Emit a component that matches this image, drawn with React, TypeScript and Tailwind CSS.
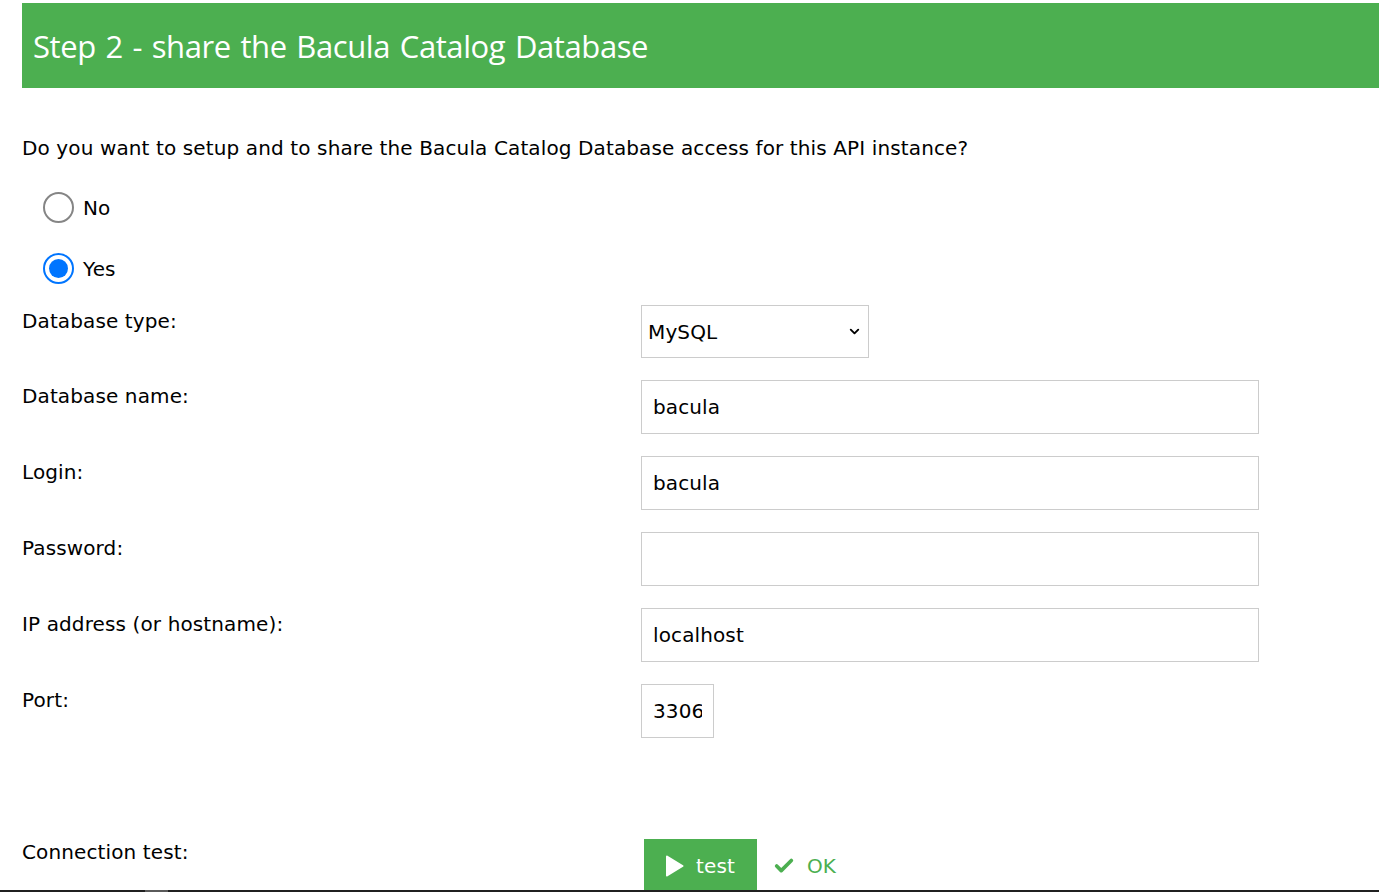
import { Check, ChevronDown } from "lucide-react";

const fields = [
  { label: "Database name:", value: "bacula", width: "w-[618px]" },
  { label: "Login:", value: "bacula", width: "w-[618px]" },
  { label: "Password:", value: "", width: "w-[618px]" },
  { label: "IP address (or hostname):", value: "localhost", width: "w-[618px]" },
  { label: "Port:", value: "3306", width: "w-[73px]" },
];

const Radio = ({ checked, label }: { checked?: boolean; label: string }) => {
  return (
    <label className="flex items-center gap-[9px] h-[31px]">
      {checked ? (
        <span className="w-[31px] h-[31px] rounded-full border-2 border-[#0075ff] bg-white flex items-center justify-center">
          <span className="w-[19px] h-[19px] rounded-full bg-[#0075ff]" />
        </span>
      ) : (
        <span className="w-[31px] h-[31px] rounded-full border-2 border-[#858585] bg-white" />
      )}
      <span>{label}</span>
    </label>
  );
};

const App = () => {
  return (
    <div className="w-[1379px] h-[892px] overflow-hidden flex flex-col bg-white text-black font-[family-name:'DejaVu_Sans',sans-serif] text-[20px] tracking-[0.12px]">
      <div className="flex-1 overflow-hidden pt-[3px] pl-[22px]">
        <header className="h-[85px] bg-[#4caf50] flex items-center pl-[11px]">
          <h1 className="text-white text-[31px] font-[family-name:'Open_Sans',sans-serif] tracking-[-0.4px] [word-spacing:2px] pt-[2px]">
            Step 2 - share the Bacula Catalog Database
          </h1>
        </header>

        <p className="mt-[48px] leading-[24px]">
          Do you want to setup and to share the Bacula Catalog Database access for this API instance?
        </p>

        <div className="mt-[32px] pl-[21px] flex flex-col gap-[30px]">
          <Radio label="No" />
          <Radio checked label="Yes" />
        </div>

        <div className="mt-[21px] flex flex-col gap-[22px]">
          <div className="flex">
            <div className="w-[619px] pt-[4px] leading-[24px]">Database type:</div>
            <div className="w-[228px] h-[53px] border border-[#cccccc] flex items-center justify-between pl-[6px] pr-[6px]">
              <span>MySQL</span>
              <ChevronDown className="w-[15px] h-[15px]" strokeWidth={3} />
            </div>
          </div>

          {fields.map((f) => (
            <div key={f.label} className="flex">
              <div className="w-[619px] pt-[4px] leading-[24px]">{f.label}</div>
              <input
                readOnly
                value={f.value}
                className={`${f.width} h-[54px] border border-[#cccccc] px-[11px] outline-none`}
              />
            </div>
          ))}
        </div>

        <div className="mt-[101px] flex">
          <div className="w-[622px] pt-[1px] leading-[24px]">Connection test:</div>
          <button className="w-[113px] h-[60px] bg-[#4caf50] text-white flex items-center pl-[21px] gap-[12px] pb-[6px]">
            <svg width="19" height="22" viewBox="0 0 19 22">
              <path d="M2 1.5 L17.5 11 L2 20.5 Z" fill="white" stroke="white" strokeWidth="2" strokeLinejoin="round" />
            </svg>
            <span>test</span>
          </button>
          <div className="flex items-center gap-[12px] pl-[16px] pb-[6px] text-[#4caf50]">
            <Check className="w-[22px] h-[22px]" strokeWidth={4} />
            <span>OK</span>
          </div>
        </div>
      </div>
      <div className="h-[2px] bg-[#202020] flex shrink-0">
        <div className="w-[145px]" />
        <div className="w-[23px] bg-[#5a5a5a]" />
      </div>
    </div>
  );
};

export default App;
